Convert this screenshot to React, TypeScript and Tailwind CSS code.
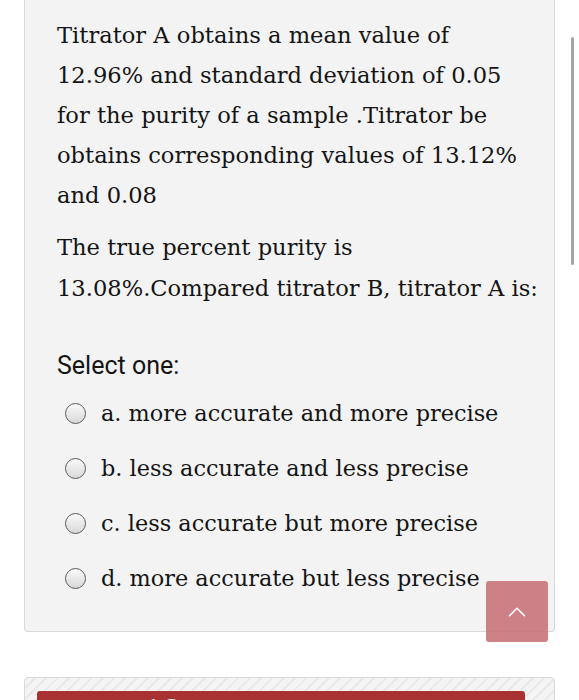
import { ChevronUp } from 'lucide-react';

const options = [
  'a. more accurate and more precise',
  'b. less accurate and less precise',
  'c. less accurate but more precise',
  'd. more accurate but less precise',
];

function Radio() {
  return (
    <span className="w-[21px] h-[21px] rounded-full border-[1.5px] border-[#5a5a5a] bg-gradient-to-b from-[#fafafa] to-[#d8d8d8] shrink-0" />
  );
}

export default function App() {
  return (
    <div className="relative min-h-[700px] bg-white overflow-hidden font-['DejaVu_Serif',serif] text-[#141414]">
      <div className="ml-[24px] w-[531px] bg-[#f3f3f3] border-x border-b border-[#d8d8d8] rounded-b-[4px] pt-[15px] pb-[25px] pl-[32px]">
        <p className="text-[22.6px] leading-[40px]">
          Titrator A obtains a mean value of
          <br />
          12.96% and standard deviation of 0.05
          <br />
          for the purity of a sample .Titrator be
          <br />
          obtains corresponding values of 13.12%
          <br />
          and 0.08
        </p>
        <p className="mt-[12px] text-[22.6px] leading-[40.5px]">
          The true percent purity is
          <br />
          13.08%.Compared titrator B, titrator A is:
        </p>
        <p className="mt-[38px] text-[25px] leading-[40px] font-['Roboto',sans-serif]">Select one:</p>
        <div className="flex flex-col">
          {options.map((o) => (
            <label key={o} className="h-[55px] flex items-center gap-[15px] pl-[8px] text-[22.4px]">
              <Radio />
              <span>{o}</span>
            </label>
          ))}
        </div>
      </div>

      <div className="mt-[45px] ml-[24px] w-[531px] border border-[#d8d8d8] rounded-t-[4px] bg-[repeating-linear-gradient(135deg,#f4f4f4_0px,#f4f4f4_6px,#e9e9e9_6px,#e9e9e9_8px)] pt-[13px] pl-[12px] pr-[29px]">
        <div className="h-[60px] bg-[#a83232] rounded-t-[3px] text-white font-['Roboto',sans-serif] text-[36px] font-medium pl-[104px] leading-[36px] pt-[4px]">
          10
        </div>
      </div>

      <div className="absolute left-[571px] top-[37px] w-[3px] h-[228px] rounded-full bg-[#a4a4a4]" />

      <button className="absolute left-[486px] top-[581px] w-[62px] h-[61px] rounded-[3px] bg-[#c9747b]/90 flex items-center justify-center">
        <ChevronUp className="w-[30px] h-[30px] text-white" strokeWidth={1.3} />
      </button>
    </div>
  );
}
